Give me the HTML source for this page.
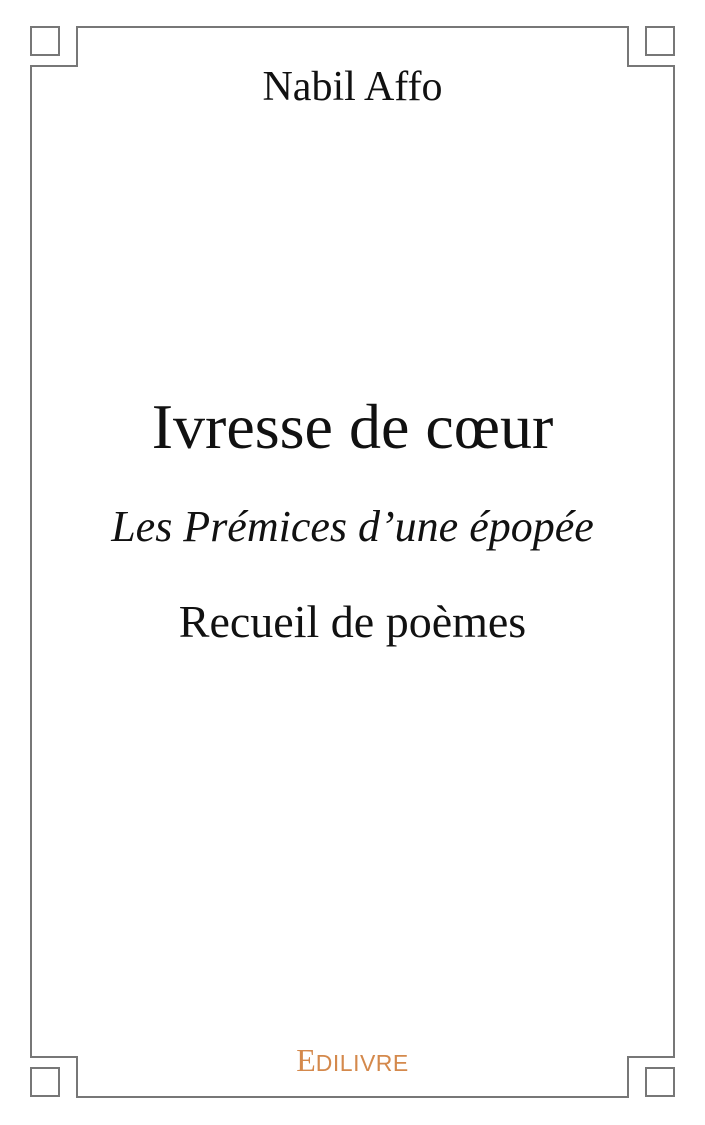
<!DOCTYPE html>
<html><head><meta charset="utf-8"><style>
body{margin:0;width:705px;height:1125px;background:#fff;position:relative;overflow:hidden;font-family:"Liberation Serif",serif;color:#111}
.t{position:absolute;left:0;width:705px;text-align:center;white-space:nowrap}
</style></head><body>
<svg width="705" height="1125" style="position:absolute;left:0;top:0" fill="none" stroke="#777" stroke-width="2">
<path d="M31 1057 V66 H77 V27 H628 V66 H674 V1057 H628 V1097 H77 V1057 Z"/>
<rect x="31" y="27" width="28" height="28"/>
<rect x="646" y="27" width="28" height="28"/>
<rect x="31" y="1068" width="28" height="28"/>
<rect x="646" y="1068" width="28" height="28"/>
</svg>
<div class="t" style="top:63px;font-size:42px">Nabil Affo</div>
<div class="t" style="top:390px;font-size:64px">Ivresse de cœur</div>
<div class="t" style="top:501px;font-size:44px;font-style:italic">Les Prémices d’une épopée</div>
<div class="t" style="top:595px;font-size:46px">Recueil de poèmes</div>
<div class="t" style="top:1042px;font-family:'Liberation Sans',sans-serif;color:#d4894c;font-size:26px"><span style="font-family:'Liberation Serif',serif;font-size:32px">E</span><span style="font-size:23px;letter-spacing:0.5px">DILIVRE</span></div>
</body></html>
